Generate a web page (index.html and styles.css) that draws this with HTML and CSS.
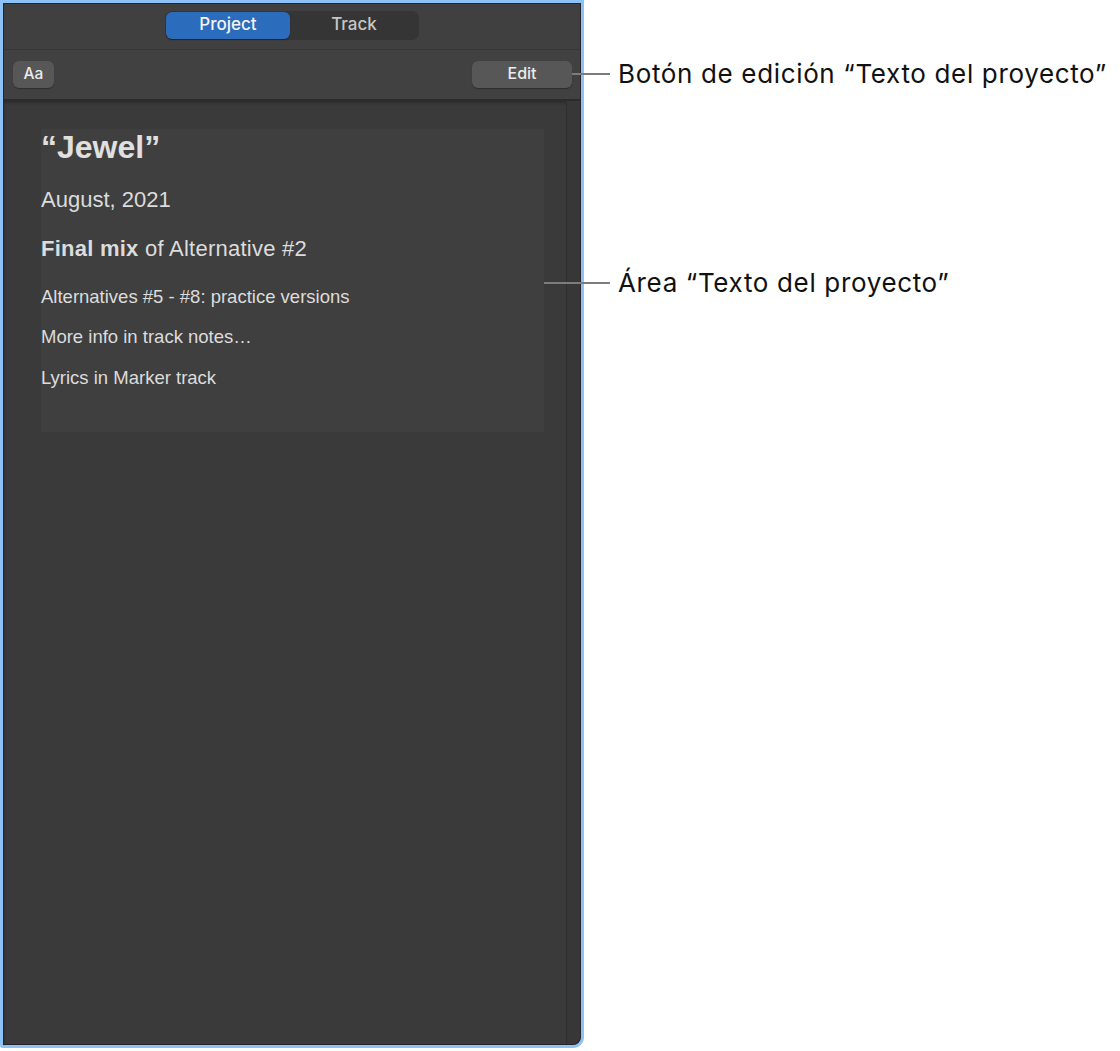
FILE: index.html
```html
<!DOCTYPE html>
<html lang="es">
<head>
<meta charset="utf-8">
<title>Texto del proyecto</title>
<link rel="stylesheet" href="styles.css">
</head>
<body>
<div class="stage">
  <div class="window">
    <div class="window-inner">
      <div class="toolbar-top">
        <div class="segmented">
          <div class="seg seg-active">Project</div>
          <div class="seg">Track</div>
        </div>
      </div>
      <div class="toolbar-bottom">
        <div class="btn btn-aa">Aa</div>
        <div class="btn btn-edit">Edit</div>
      </div>
      <div class="content">
        <div class="pane">
          <div class="notes">
            <div class="line title">“Jewel”</div>
            <div class="line big date">August, 2021</div>
            <div class="line big mix"><b>Final mix</b> of Alternative #2</div>
            <div class="line small alt">Alternatives #5 - #8: practice versions</div>
            <div class="line small more">More info in track notes…</div>
            <div class="line small lyrics">Lyrics in Marker track</div>
          </div>
        </div>
        <div class="scroll-track"></div>
      </div>
    </div>
  </div>

  <div class="callout callout-edit">
    <span class="leader leader-edit"></span>
    <span class="callout-text">Botón de edición “Texto del proyecto”</span>
  </div>
  <div class="callout callout-area">
    <span class="leader leader-area"></span>
    <span class="callout-text">Área “Texto del proyecto”</span>
  </div>
</div>
</body>
</html>
```

FILE: styles.css
```css
html, body {
  margin: 0;
  padding: 0;
  background: #ffffff;
}

.stage {
  position: relative;
  width: 1120px;
  height: 1051px;
}

.window {
  width: 578px;
  height: 1042px;
  border: 3px solid #8ec1f8;
  border-radius: 0 0 11px 3px;
  overflow: hidden;
  background: #262626;
}

.window-inner {
  box-sizing: border-box;
  height: 100%;
  border: 1px solid #262626;
  border-radius: 0 0 9px 2px;
  display: flex;
  flex-direction: column;
  overflow: hidden;
  background: #3a3a3a;
}

.toolbar-top {
  box-sizing: border-box;
  height: 46px;
  background: #404040;
  border-bottom: 1px solid #373737;
  display: flex;
  justify-content: center;
  align-items: flex-start;
  padding-top: 7px;
}

.segmented {
  display: flex;
  width: 254px;
  height: 29px;
  box-sizing: border-box;
  padding: 1px;
  border-radius: 7px;
  background: #353535;
}

.seg {
  flex: 1;
  display: flex;
  align-items: center;
  justify-content: center;
  padding-bottom: 3px;
  box-sizing: border-box;
  font-family: Inter, "Liberation Sans", sans-serif;
  font-size: 17px;
  font-weight: 500;
  color: #c6c6c6;
  border-radius: 6px;
}

.seg-active {
  flex: 0 0 124px;
  background: #2b6cbc;
  color: #f4f4f4;
  box-shadow: 0 1px 1px rgba(0, 0, 0, 0.35);
}

.toolbar-bottom {
  height: 51px;
  box-sizing: border-box;
  background: #414141;
  border-bottom: 2px solid #2b2b2b;
  display: flex;
  justify-content: space-between;
  align-items: flex-start;
  padding: 11px 8px 0 9px;
}

.btn {
  height: 27px;
  box-sizing: border-box;
  padding-bottom: 3px;
  border-radius: 6px;
  background: #575757;
  display: flex;
  align-items: center;
  justify-content: center;
  font-family: Inter, "Liberation Sans", sans-serif;
  font-size: 16px;
  font-weight: 500;
  color: #ececec;
  box-shadow: 0 1px 1px rgba(0, 0, 0, 0.3);
}

.btn-aa {
  width: 41px;
  font-size: 15.5px;
}

.btn-edit {
  width: 100px;
}

.content {
  flex: 1;
  display: flex;
  background: #3a3a3a;
  box-shadow: inset 0 2px 3px rgba(0, 0, 0, 0.25);
}

.pane {
  flex: 1;
  padding: 28px 0 0 37px;
}

.notes {
  width: 503px;
  height: 303px;
  box-sizing: border-box;
  background: #3f3f3f;
  font-family: "Liberation Sans", Arial, sans-serif;
  color: #dcdcdc;
}

.line {
  white-space: nowrap;
}

.title {
  font-size: 32px;
  font-weight: bold;
  line-height: 36px;
  color: #e0e0e0;
}

.big {
  font-size: 22px;
  line-height: 30px;
}

.date {
  margin-top: 20px;
}

.mix {
  margin-top: 19px;
  letter-spacing: 0.25px;
}

.mix b {
  font-weight: bold;
}

.small {
  font-size: 18.5px;
  line-height: 26px;
}

.alt {
  margin-top: 20px;
}

.more {
  margin-top: 14px;
}

.lyrics {
  margin-top: 15px;
}

.scroll-track {
  width: 13px;
  background: #373737;
  border-left: 1px solid #2e2e2e;
}

.callout {
  position: absolute;
  display: flex;
  align-items: center;
  height: 30px;
}

.callout-edit {
  left: 572px;
  top: 58px;
}

.callout-area {
  left: 544px;
  top: 267px;
}

.leader {
  display: block;
  height: 2px;
  background: #7c7c7c;
  margin-right: 8px;
}

.leader-edit {
  width: 38px;
  margin-top: 2px;
}

.leader-area {
  width: 66px;
  margin-top: 2px;
}

.callout-text {
  font-family: Inter, "Liberation Sans", sans-serif;
  font-size: 26px;
  letter-spacing: 0.65px;
  color: #111111;
  white-space: nowrap;
}
```
